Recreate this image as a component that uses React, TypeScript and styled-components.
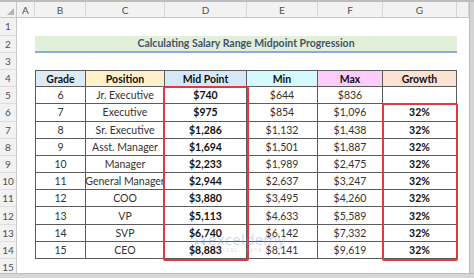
import { FC } from 'react';
import styled, { createGlobalStyle } from 'styled-components';

const ROW_H = 17.2;
const HEAD_H = 16.4;
const COLS = '17px 18px 51px 79px 82px 71px 65px 74px 1fr';
const LETTERS = ['A', 'B', 'C', 'D', 'E', 'F', 'G', ''];
const RED = '#e2383f';
const FONT = "Lato, 'Liberation Sans', sans-serif";

const GlobalStyle = createGlobalStyle`
  html, body {
    margin: 0;
    padding: 0;
    background: #ffffff;
    overflow: hidden;
  }
`;

interface IRow {
  grade: number;
  position: string;
  mid: string;
  min: string;
  max: string;
  growth: string;
}

const rows: IRow[] = [
  { grade: 6, position: 'Jr. Executive', mid: '$740', min: '$644', max: '$836', growth: '' },
  { grade: 7, position: 'Executive', mid: '$975', min: '$854', max: '$1,096', growth: '32%' },
  { grade: 8, position: 'Sr. Executive', mid: '$1,286', min: '$1,132', max: '$1,438', growth: '32%' },
  { grade: 9, position: 'Asst. Manager', mid: '$1,694', min: '$1,501', max: '$1,887', growth: '32%' },
  { grade: 10, position: 'Manager', mid: '$2,233', min: '$1,989', max: '$2,475', growth: '32%' },
  { grade: 11, position: 'General Manager', mid: '$2,944', min: '$2,637', max: '$3,247', growth: '32%' },
  { grade: 12, position: 'COO', mid: '$3,880', min: '$3,495', max: '$4,260', growth: '32%' },
  { grade: 13, position: 'VP', mid: '$5,113', min: '$4,633', max: '$5,589', growth: '32%' },
  { grade: 14, position: 'SVP', mid: '$6,740', min: '$6,142', max: '$7,332', growth: '32%' },
  { grade: 15, position: 'CEO', mid: '$8,883', min: '$8,141', max: '$9,619', growth: '32%' },
];

const headers = [
  { label: 'Grade', fill: '#ddebf7' },
  { label: 'Position', fill: '#fff0cc' },
  { label: 'Mid Point', fill: '#d6e8f8' },
  { label: 'Min', fill: '#d4fafd' },
  { label: 'Max', fill: '#fccdfb' },
  { label: 'Growth', fill: '#fce2d3' },
];

const Sheet = styled.div`
  width: 474px;
  height: 278px;
  display: flex;
  flex-direction: column;
  overflow: hidden;
  background: #ffffff;
  font-family: ${FONT};
`;

const TopEdge = styled.div`
  height: 2px;
  background: #bdbdbd;
  flex: none;
`;

const Workspace = styled.div`
  flex: 1;
  min-height: 0;
  display: flex;
`;

const Grid = styled.div`
  flex: 1;
  position: relative;
  overflow: hidden;
  display: flex;
  flex-direction: column;
`;

const VScroll = styled.div`
  width: 4px;
  background: #d4d4d4;
  border-left: 1px solid #bcbcbc;
`;

const HScroll = styled.div`
  height: 4px;
  flex: none;
  background: #d6d6d6;
  border-top: 1px solid #bdbdbd;
`;

const HeaderRow = styled.div`
  display: grid;
  grid-template-columns: ${COLS};
  height: ${HEAD_H}px;
  flex: none;
  background: #f2f2f2;
  border-bottom: 1px solid #c8c8c8;
  box-sizing: border-box;
`;

const Corner = styled.div`
  position: relative;
  border-right: 1px solid #c8c8c8;

  &::after {
    content: '';
    position: absolute;
    right: 2px;
    bottom: 2px;
    border-style: solid;
    border-width: 0 0 7px 7px;
    border-color: transparent transparent #b4b4b4 transparent;
  }
`;

const Letter = styled.div`
  display: flex;
  align-items: center;
  justify-content: center;
  border-right: 1px solid #d6d6d6;
  color: #505050;
  font-size: 10px;
`;

const Row = styled.div`
  display: grid;
  grid-template-columns: ${COLS};
  height: ${ROW_H}px;
  flex: none;
`;

const RowNum = styled.div`
  display: flex;
  align-items: center;
  justify-content: center;
  background: #f2f2f2;
  border-right: 1px solid #c8c8c8;
  border-bottom: 1px solid #dedede;
  box-sizing: border-box;
  color: #505050;
  font-size: 10px;
`;

const Banner = styled.div`
  grid-column: 3 / 9;
  display: flex;
  align-items: center;
  justify-content: center;
  background: #e2efda;
  border-bottom: 2px solid #8eaadb;
  box-sizing: border-box;
  color: #44546a;
  font-size: 10.5px;
  font-weight: 700;
`;

const Cell = styled.div<{ $fill?: string; $bold?: boolean; $first?: boolean; $top?: boolean }>`
  display: flex;
  align-items: center;
  justify-content: center;
  box-sizing: border-box;
  background: ${(p) => p.$fill || 'transparent'};
  border-right: 1px solid #5c5c5c;
  border-bottom: 1px solid #5c5c5c;
  border-left: ${(p) => (p.$first ? '1px solid #5c5c5c' : 'none')};
  border-top: ${(p) => (p.$top ? '1px solid #5c5c5c' : 'none')};
  color: ${(p) => (p.$bold ? '#111' : '#333')};
  font-size: 10.5px;
  font-weight: ${(p) => (p.$bold ? 700 : 400)};
  white-space: nowrap;
`;

const Highlight = styled.div`
  position: absolute;
  border: 2px solid ${RED};
  border-radius: 2px;
  box-sizing: border-box;
  pointer-events: none;
`;

const Watermark = styled.div`
  position: absolute;
  left: 194px;
  top: 229px;
  display: flex;
  align-items: center;
  gap: 2px;
  opacity: 0.38;
  pointer-events: none;
`;

const MarkText = styled.div`
  display: flex;
  flex-direction: column;
  align-items: center;
  color: #7e9bd6;
`;

const MarkName = styled.span`
  font-family: 'Open Sans', sans-serif;
  font-size: 15px;
  line-height: 16px;
  letter-spacing: 0.3px;
`;

const MarkSub = styled.span`
  font-family: 'Liberation Sans', sans-serif;
  font-size: 5px;
  letter-spacing: 1px;
  color: #9aa9c4;
`;

const Logo: FC = () => (
  <svg width='12' height='12' viewBox='0 0 12 12'>
    <path d='M1 2 L6 6 L1 10 Z' fill='#8fb0e8' />
    <path d='M11 2 L6 6 L11 10 Z' fill='#6f8fd8' />
  </svg>
);

const EmptyRow: FC<{ n: number }> = ({ n }) => (
  <Row>
    <RowNum>{n}</RowNum>
  </Row>
);

const colX = (idx: number) => [17, 18, 51, 79, 82, 71, 65, 74].slice(0, idx).reduce((a, b) => a + b, 0);
const rowY = (n: number) => HEAD_H + (n - 1) * ROW_H;

export default function App() {
  return (
    <>
      <GlobalStyle />
      <Sheet>
        <TopEdge />
        <Workspace>
          <Grid>
            <HeaderRow>
              <Corner />
              {LETTERS.map((l, i) => (
                <Letter key={i}>{l}</Letter>
              ))}
            </HeaderRow>
            <EmptyRow n={1} />
            <Row>
              <RowNum>2</RowNum>
              <div />
              <Banner>Calculating Salary Range Midpoint Progression</Banner>
            </Row>
            <EmptyRow n={3} />
            <Row>
              <RowNum>4</RowNum>
              <div />
              {headers.map((h, i) => (
                <Cell key={h.label} $fill={h.fill} $bold $top $first={i === 0}>
                  {h.label}
                </Cell>
              ))}
            </Row>
            {rows.map((r, i) => (
              <Row key={r.grade}>
                <RowNum>{i + 5}</RowNum>
                <div />
                <Cell $first>{r.grade}</Cell>
                <Cell>{r.position}</Cell>
                <Cell $bold>{r.mid}</Cell>
                <Cell>{r.min}</Cell>
                <Cell>{r.max}</Cell>
                <Cell $bold>{r.growth}</Cell>
              </Row>
            ))}
            <EmptyRow n={15} />
            <Highlight
              style={{
                left: colX(4) - 2,
                top: rowY(5) - 1,
                width: 86,
                height: rowY(15) - rowY(5) + 3,
              }}
            />
            <Highlight
              style={{
                left: colX(7) - 1,
                top: rowY(6) - 1,
                width: 76,
                height: rowY(15) - rowY(6) + 3,
              }}
            />
            <Watermark>
              <Logo />
              <MarkText>
                <MarkName>exceldemy</MarkName>
                <MarkSub>EXCEL · DATA · BI</MarkSub>
              </MarkText>
            </Watermark>
          </Grid>
          <VScroll />
        </Workspace>
        <HScroll />
      </Sheet>
    </>
  );
}
